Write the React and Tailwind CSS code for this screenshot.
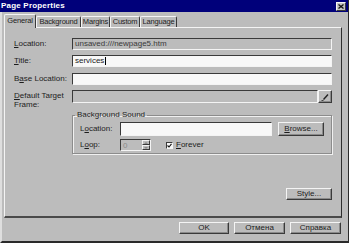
import React from 'react';

const sunken = 'border-t border-l border-t-[#3a3a3a] border-l-[#3a3a3a] border-b border-r border-b-[#f4f4f4] border-r-[#f4f4f4]';
const raised = 'border-t border-l border-t-[#f4f4f4] border-l-[#f4f4f4] border-b border-r border-b-[#3a3a3a] border-r-[#3a3a3a]';

function U({ children }) {
    return <span className="underline underline-offset-[1px]">{children}</span>;
}

function Field({ value, disabled, caret, className = '' }) {
    return (
        <div className={`${sunken} h-[12px] shrink-0 flex items-center px-[2px] ${disabled ? 'bg-[#bcbcbc] text-[#3a3a3a]' : 'bg-[#f8f8f8]'} ${className}`}>
            <span>{value}</span>
            {caret && <span className="w-px h-[8px] bg-black ml-px" />}
        </div>
    );
}

function Button({ children, className = '' }) {
    return (
        <div className={`${raised} h-[12px] shrink-0 flex items-center justify-center shadow-[inset_-1px_-1px_0_#8a8a8a] ${className}`}>
            {children}
        </div>
    );
}

export default function App() {
    const tabs = [
        { name: 'Background', w: 'w-[45px]' },
        { name: 'Margins', w: 'w-[29px]' },
        { name: 'Custom', w: 'w-[30px]' },
        { name: 'Language', w: 'w-[37px]' },
    ];

    return (
        <div className="w-[349px] h-[243px] bg-[#bcbcbc] flex flex-col border-l-2 border-l-[#dedede] border-r border-r-[#2a2a2a] border-b-2 border-b-[#2a2a2a] font-['Liberation_Sans',sans-serif] text-[8px] leading-none text-[#1c1c1c]">
            {/* Title bar */}
            <div className="h-[12px] bg-[#00007a] flex items-center justify-between pl-[1px] pr-[2px] -ml-[2px]">
                <span className="text-white font-bold text-[8px] tracking-[0.2px]">Page Properties</span>
                <div className={`${raised} w-[10px] h-[9px] bg-[#c4c4c4] flex items-center justify-center`}>
                    <svg width="6" height="5" viewBox="0 0 6 5">
                        <path d="M0.5 0.5 L5.5 4.5 M5.5 0.5 L0.5 4.5" stroke="#111" strokeWidth="1.3" />
                    </svg>
                </div>
            </div>

            {/* Tabs */}
            <div className="flex items-end h-[14px] mt-[1px] ml-[2px] text-[7.5px] tracking-[-0.2px]">
                <div className="relative z-10 -mb-px w-[32px] h-[14px] bg-[#bcbcbc] border-t border-l border-t-[#f4f4f4] border-l-[#f4f4f4] border-r border-r-[#3a3a3a] rounded-t-[2px] flex items-center justify-center pb-px">
                    General
                </div>
                {tabs.map((t) => (
                    <div key={t.name} className={`${t.w} h-[11px] border-t border-l border-t-[#f4f4f4] border-l-[#f4f4f4] border-r border-r-[#3a3a3a] rounded-t-[2px] flex items-center justify-center`}>
                        {t.name}
                    </div>
                ))}
            </div>

            {/* Panel */}
            <div className="ml-[2px] mr-[6px] h-[191px] border-t border-l border-t-[#f4f4f4] border-l-[#f4f4f4] border-r border-r-[#2e2e2e] border-b-2 border-b-[#4a4a4a] pl-[9px] pr-[9px] pt-[10px] flex flex-col">
                <div className="flex items-center">
                    <span className="w-[58px] shrink-0"><U>L</U>ocation:</span>
                    <Field value="unsaved:///newpage5.htm" disabled className="flex-1" />
                </div>
                <div className="flex items-center mt-[5px]">
                    <span className="w-[58px] shrink-0"><U>T</U>itle:</span>
                    <Field value="services" caret className="flex-1" />
                </div>
                <div className="flex items-center mt-[6px]">
                    <span className="w-[58px] shrink-0">B<U>a</U>se Location:</span>
                    <Field value="" className="flex-1" />
                </div>
                <div className="flex items-start mt-[5px]">
                    <span className="w-[58px] shrink-0 leading-[9px] pt-[1px]"><U>D</U>efault Target<br />Frame:</span>
                    <div className="flex-1 flex">
                        <Field value="" disabled className="flex-1 h-[13px]" />
                        <Button className="w-[14px] h-[13px]">
                            <svg width="9" height="8" viewBox="0 0 9 8">
                                <path d="M2.5 6.5 L7 1.5" stroke="#222" strokeWidth="1.4" />
                                <path d="M0.5 7.5 L2.5 7.5" stroke="#444" strokeWidth="1" />
                            </svg>
                        </Button>
                    </div>
                </div>

                {/* Background Sound group */}
                <fieldset className="ml-[58px] mt-[2px] h-[43px] border border-[#8c8c8c] shadow-[1px_1px_0_#f0f0f0,inset_1px_1px_0_#f0f0f0] pl-[7px] pr-[7px]">
                    <legend className="px-[2px] ml-[-5px]">Background Sound</legend>
                    <div className="flex items-center mt-[3px]">
                        <span className="w-[40px] shrink-0">L<U>o</U>cation:</span>
                        <Field value="" className="w-[152px] h-[14px]" />
                        <Button className="w-[46px] h-[14px] ml-[6px]"><span><U>B</U>rowse...</span></Button>
                    </div>
                    <div className="flex items-center mt-[3px]">
                        <span className="w-[40px] shrink-0">L<U>o</U>op:</span>
                        <div className={`${sunken} w-[31px] h-[12px] shrink-0 flex`}>
                            <span className="flex-1 text-[#8a8a8a] pl-[2px] pt-[2px]">0</span>
                            <div className="w-[8px] flex flex-col">
                                <div className={`${raised} flex-1 flex items-center justify-center`}>
                                    <svg width="4" height="2" viewBox="0 0 4 2"><path d="M0 2 L2 0 L4 2Z" fill="#8a8a8a" /></svg>
                                </div>
                                <div className={`${raised} flex-1 flex items-center justify-center`}>
                                    <svg width="4" height="2" viewBox="0 0 4 2"><path d="M0 0 L2 2 L4 0Z" fill="#8a8a8a" /></svg>
                                </div>
                            </div>
                        </div>
                        <div className={`${sunken} w-[7px] h-[7px] shrink-0 bg-[#f8f8f8] ml-[15px] flex items-center justify-center`}>
                            <svg width="5" height="5" viewBox="0 0 5 5"><path d="M0.5 2.5 L2 4 L4.5 0.8" stroke="#111" strokeWidth="1.1" fill="none" /></svg>
                        </div>
                        <span className="ml-[3px]"><U>F</U>orever</span>
                    </div>
                </fieldset>

                <div className="flex justify-end mt-[34px]">
                    <Button className="w-[46px]">Style...</Button>
                </div>
            </div>

            {/* Bottom buttons */}
            <div className="flex justify-end gap-[5px] mt-[4px] mr-[7px]">
                <Button className="w-[50px] border border-[#1a1a1a]">OK</Button>
                <Button className="w-[51px]">Отмена</Button>
                <Button className="w-[51px]">Справка</Button>
            </div>
        </div>
    );
}
